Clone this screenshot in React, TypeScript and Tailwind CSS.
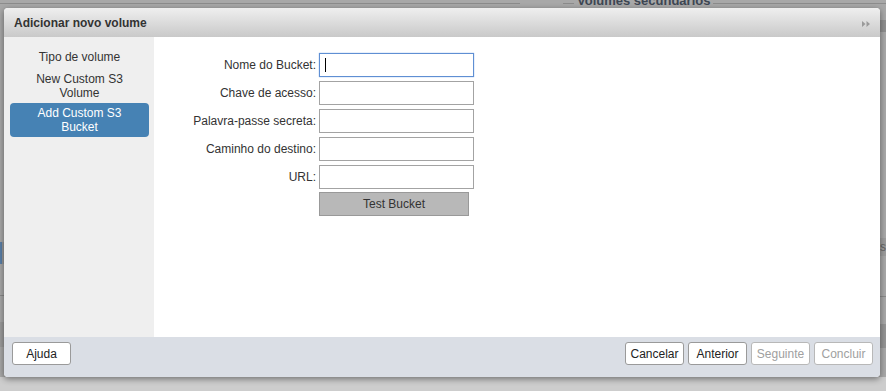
import React from 'react';

const fields = [
  'Nome do Bucket:',
  'Chave de acesso:',
  'Palavra-passe secreta:',
  'Caminho do destino:',
  'URL:',
];

function Btn({ label, disabled = false }: { label: string; disabled?: boolean }) {
  return (
    <button
      className={
        'h-[23px] w-[59px] rounded-[3px] border bg-white text-[12px] leading-none ' +
        (disabled ? 'border-[#b8b8b8] text-[#a0a0a0]' : 'border-[#9a9a9a] text-[#222]')
      }
    >
      {label}
    </button>
  );
}

export default function App() {
  return (
    <div className="relative h-[391px] w-[886px] overflow-hidden bg-[#a8a8a8] font-['Liberation_Sans',Arial,sans-serif] text-[12px] text-[#333]">
      {/* page behind the modal, dimmed */}
      <div className="absolute left-0 right-0 top-[3px] h-px bg-[#8c8c8c]" />
      <div className="absolute left-[520px] top-0 h-[8px] w-[43px] bg-[#a8a8a8]" />
      <div className="absolute left-[574px] top-[-6px] bg-[#a8a8a8] px-[3px] text-[13px] font-bold leading-[14px] text-[#3d4653]">
        Volumes secundários
      </div>
      <div className="absolute left-0 top-[242px] h-[22px] w-[4px] border-l-2 border-[#5a7fa8] bg-[#9a9a9a]" />
      <div className="absolute left-0 top-[295px] h-px w-[4px] bg-[#8a8a8a]" />
      <div className="absolute left-0 top-[322px] h-[25px] w-[4px] bg-[#9b9b9b]" />
      <div className="absolute right-0 top-[20px] h-[12px] w-[6px] bg-[#8f8f8f]" />
      <div className="absolute right-0 top-[238px] h-[18px] w-[6px] bg-[#9d9d9d] text-[12px] leading-[18px] text-[#666]">st</div>
      <div className="absolute right-0 top-[296px] h-px w-[6px] bg-[#8a8a8a]" />
      <div className="absolute right-0 top-[324px] h-[24px] w-[6px] bg-[#959595]" />
      <div className="absolute bottom-0 left-0 right-0 h-[14px] bg-[#cdcdcd]" />

      {/* modal */}
      <div className="absolute left-[4px] top-[8px] flex h-[369px] w-[876px] flex-col overflow-hidden rounded-[4px] bg-white shadow-[0_2px_6px_rgba(0,0,0,0.45)]">
        <div className="flex h-[29px] shrink-0 items-center justify-between bg-gradient-to-b from-[#efefef] to-[#c9c9c9] pl-[10px] pr-[10px]">
          <span className="text-[12px] font-bold text-[#333]">Adicionar novo volume</span>
          <svg width="8" height="6" viewBox="0 0 8 6" className="mt-[2px]">
            <path d="M0 0L3.5 3L0 6Z M4.5 0L8 3L4.5 6Z" fill="#9a9a9a" />
          </svg>
        </div>

        <div className="flex flex-1">
          <div className="flex w-[150px] flex-col gap-[2px] bg-[#efefef] pl-[6px] pr-[5px] pt-[10px] text-center leading-[14px]">
            <div className="py-[3px]">Tipo de volume</div>
            <div className="py-[3px]">
              New Custom S3
              <br />
              Volume
            </div>
            <div className="-mt-[2px] rounded-[4px] bg-[#4682b4] py-[3px] text-white">
              Add Custom S3
              <br />
              Bucket
            </div>
          </div>

          <div className="flex-1 pt-[16px]">
            <div className="grid grid-cols-[162px_155px] gap-x-[3px] gap-y-[4px]">
              {fields.map((f, i) => (
                <React.Fragment key={f}>
                  <div className="flex h-[24px] items-center justify-end">{f}</div>
                  <div
                    className={
                      'flex h-[24px] items-center border bg-white pl-[5px] ' +
                      (i === 0 ? 'border-[#5f8fd3] shadow-[0_0_1px_#7aa7e6]' : 'border-[#a3a3a3]')
                    }
                  >
                    {i === 0 && <span className="h-[14px] w-px bg-black" />}
                  </div>
                </React.Fragment>
              ))}
              <div />
              <button className="-mt-[1px] h-[24px] w-[150px] border border-[#999] bg-[#b8b8b8] text-[12px] text-[#333]">
                Test Bucket
              </button>
            </div>
          </div>
        </div>

        <div className="flex h-[40px] shrink-0 items-start justify-between bg-[#dadee5] pl-[8px] pr-[7px] pt-[5px]">
          <Btn label="Ajuda" />
          <div className="flex gap-[4px]">
            <Btn label="Cancelar" />
            <Btn label="Anterior" />
            <Btn label="Seguinte" disabled />
            <Btn label="Concluir" disabled />
          </div>
        </div>
      </div>
    </div>
  );
}
